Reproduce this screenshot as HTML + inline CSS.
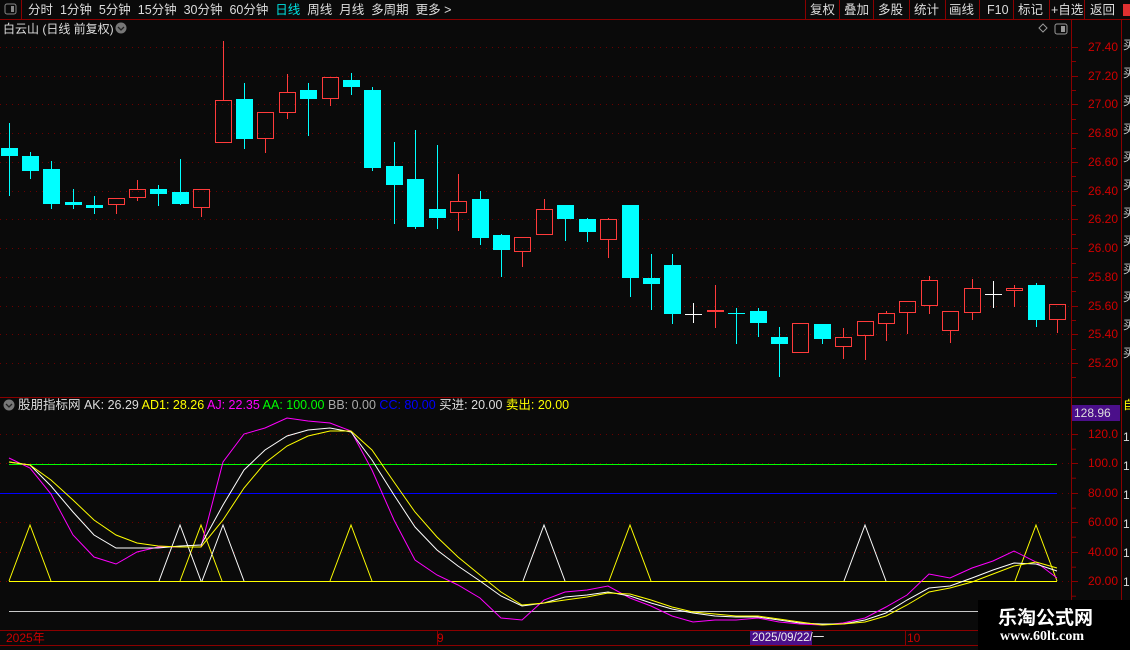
<!DOCTYPE html>
<html><head><meta charset="utf-8">
<style>
html,body{margin:0;padding:0;background:#0a0a0a;width:1130px;height:650px;overflow:hidden}
body{font-family:"Liberation Sans","Noto Sans CJK SC",sans-serif;position:relative}
.t{position:absolute;white-space:nowrap;font-size:12px;line-height:14px}
</style></head><body>
<svg id="s" width="1130" height="650" style="position:absolute;left:0;top:0" xmlns="http://www.w3.org/2000/svg">
<rect width="1130" height="650" fill="#0a0a0a"/>
<rect x="0" y="0" width="1130" height="19" fill="#0a0a0a"/>
<line x1="0" y1="19.5" x2="1130" y2="19.5" stroke="#8b0000"/>
<line x1="21.5" y1="0" x2="21.5" y2="19" stroke="#8b0000"/>
<rect x="5" y="4" width="11" height="10" rx="2" fill="none" stroke="#888"/><rect x="11" y="6" width="3" height="6" fill="#888"/>
<g stroke="#8b0000">
<line x1="805.5" y1="0" x2="805.5" y2="19"/><line x1="839.5" y1="0" x2="839.5" y2="19"/><line x1="873.5" y1="0" x2="873.5" y2="19"/><line x1="909.5" y1="0" x2="909.5" y2="19"/><line x1="945.5" y1="0" x2="945.5" y2="19"/><line x1="979.5" y1="0" x2="979.5" y2="19"/><line x1="1013.5" y1="0" x2="1013.5" y2="19"/><line x1="1049.5" y1="0" x2="1049.5" y2="19"/><line x1="1084.5" y1="0" x2="1084.5" y2="19"/>
</g>
<rect x="1123" y="4" width="7" height="12" fill="#e03030"/>
<line x1="1071.5" y1="19" x2="1071.5" y2="630" stroke="#8b0000"/>
<line x1="1121.5" y1="19" x2="1121.5" y2="650" stroke="#8b0000"/>
<line x1="0" y1="397.5" x2="1122" y2="397.5" stroke="#8b0000"/>
<line x1="0" y1="630.5" x2="1122" y2="630.5" stroke="#8b0000"/>
<line x1="0" y1="645.5" x2="1122" y2="645.5" stroke="#8b0000"/>
<line x1="437.5" y1="630" x2="437.5" y2="645" stroke="#8b0000"/>
<line x1="905.5" y1="630" x2="905.5" y2="645" stroke="#8b0000"/>
<rect x="750" y="631" width="62" height="14" fill="#4b0f8a"/>
<rect x="1072" y="405" width="48" height="16" fill="#4b0f8a"/>
<path d="M1043 24 l4 4 -4 4 -4 -4z" fill="none" stroke="#999"/>
<rect x="1055" y="24" width="12" height="10" rx="2" fill="none" stroke="#999"/><rect x="1061" y="26" width="4" height="6" fill="#999"/>
<circle cx="121" cy="28" r="5.5" fill="#777"/><path d="M118 27 l3 3 3-3" fill="none" stroke="#222" stroke-width="1.3"/>
<circle cx="9" cy="405" r="5.5" fill="#777"/><path d="M6 404 l3 3 3-3" fill="none" stroke="#222" stroke-width="1.3"/>
<g id="g"></g>
</svg>
<div class="t" style="left:28px;top:3px;color:#ddd;font-size:12.5px">分时&nbsp;&nbsp;1分钟&nbsp;&nbsp;5分钟&nbsp;&nbsp;15分钟&nbsp;&nbsp;30分钟&nbsp;&nbsp;60分钟&nbsp;&nbsp;<span style="color:#00e0e0">日线</span>&nbsp;&nbsp;周线&nbsp;&nbsp;月线&nbsp;&nbsp;多周期&nbsp;&nbsp;更多 &gt;</div>
<div class="t" style="left:810px;top:3px;color:#ddd;font-size:12.5px">复权</div>
<div class="t" style="left:844px;top:3px;color:#ddd;font-size:12.5px">叠加</div>
<div class="t" style="left:878px;top:3px;color:#ddd;font-size:12.5px">多股</div>
<div class="t" style="left:914px;top:3px;color:#ddd;font-size:12.5px">统计</div>
<div class="t" style="left:949px;top:3px;color:#ddd;font-size:12.5px">画线</div>
<div class="t" style="left:987px;top:3px;color:#ddd;font-size:12.5px">F10</div>
<div class="t" style="left:1018px;top:3px;color:#ddd;font-size:12.5px">标记</div>
<div class="t" style="left:1051px;top:3px;color:#ddd;font-size:12.5px">+自选</div>
<div class="t" style="left:1090px;top:3px;color:#ddd;font-size:12.5px">返回</div>
<div class="t" style="left:3px;top:22px;color:#ddd;font-size:12px">白云山 (日线 前复权)</div>
<div class="t" style="left:18px;top:398px;color:#ddd;font-size:12.5px">股朋指标网 AK: 26.29 <span style="color:#ff0">AD1: 28.26</span> <span style="color:#f0f">AJ: 22.35</span> <span style="color:#0f0">AA: 100.00</span> <span style="color:#aaa">BB: 0.00</span> <span style="color:#00f">CC: 80.00</span> 买进: 20.00 <span style="color:#ff0">卖出: 20.00</span></div>
<div id="ax"></div>
<div class="t" style="left:1074px;top:406px;color:#ddd;font-size:12px">128.96</div>
<div class="t" style="left:6px;top:631px;color:#c00;font-size:12px">2025年</div>
<div class="t" style="left:437px;top:631px;color:#c00;font-size:12px">9</div>
<div class="t" style="left:907px;top:631px;color:#c00;font-size:12px">10</div>
<div class="t" style="left:752px;top:631px;color:#eee;font-size:11.5px">2025/09/22/一</div>
<div style="position:absolute;left:978px;top:600px;width:152px;height:50px;background:#000"></div>
<div class="t" style="left:998px;top:606px;color:#fff;font-size:19px;line-height:22px;font-weight:bold;font-family:'Noto Sans CJK SC',sans-serif">乐淘公式网</div>
<div class="t" style="left:1000px;top:630px;color:#fff;font-size:14px;font-weight:bold;font-family:'Liberation Serif',serif">www.60lt.com</div>
<div class="t" style="left:1123px;top:398px;color:#ff0;font-size:12px">自</div>
<script>
var g=document.getElementById('g'),h='';
function L(x1,y1,x2,y2,c,w,d){h+='<line x1="'+x1+'" y1="'+y1+'" x2="'+x2+'" y2="'+y2+'" stroke="'+c+'" stroke-width="'+(w||1)+'"'+(d?' stroke-dasharray="'+d+'"':'')+'/>';}
var ax='';
for(var i=0;i<12;i++){var p=27.4-i*0.2,y=47+i*28.73;L(0,Math.round(y)+.5,1070,Math.round(y)+.5,'#6a0000',1,'1 5');L(1072,Math.round(y)+.5,1078,Math.round(y)+.5,'#8b0000');L(1072,Math.round(y+14.4)+.5,1076,Math.round(y+14.4)+.5,'#8b0000');
ax+='<div class="t" style="left:1080px;top:'+(Math.round(y)-7)+'px;width:38px;text-align:right;color:#d00000;font-size:12px">'+p.toFixed(2)+'</div>';}
var iv=[120,100,80,60,40,20];
iv.forEach(function(v){var y=Math.round(581-(v-20)*1.47)+.5;L(0,y,1070,y,'#6a0000',1,'1 5');L(1072,y,1078,y,'#8b0000');L(1072,y+14.7,1076,y+14.7,'#8b0000');
ax+='<div class="t" style="left:1080px;top:'+(y-7.5)+'px;width:38px;text-align:right;color:#d00000;font-size:12px">'+(v>=100?v.toFixed(1):v.toFixed(2))+'</div>';});
document.getElementById('ax').innerHTML=ax;
var sc='';for(var i=0;i<12;i++){sc+='<div class="t" style="left:1123px;top:'+(38+i*28)+'px;color:#ccc;font-size:12px">买</div>';}
for(var i=0;i<8;i++){sc+='<div class="t" style="left:1123px;top:'+(430+i*29)+'px;color:#ddd;font-size:12px">1</div>';}
document.getElementById('ax').innerHTML+=sc;
var C=[[9,123,148,156,196,'c'],[30,152,156,171,179,'c'],[51,161,169,204,209,'c'],[73,189,202,205,209,'c'],[94,196,205,208,214,'c'],[116,198,198,205,214,'r'],[137,180,189,198,201,'r'],[158,185,189,194,206,'c'],[180,159,192,204,205,'c'],[201,189,189,208,217,'r'],[223,41,100,143,143,'r'],[244,83,99,139,149,'c'],[265,112,112,139,153,'r'],[287,74,92,113,119,'r'],[308,83,90,99,136,'c'],[330,77,77,99,106,'r'],[351,73,80,87,95,'c'],[372,87,90,168,171,'c'],[394,142,166,185,224,'c'],[415,130,179,227,229,'c'],[437,145,209,218,229,'c'],[458,174,201,213,231,'r'],[480,191,199,238,245,'c'],[501,234,235,250,277,'c'],[522,237,237,252,267,'r'],[544,199,209,235,235,'r'],[565,205,205,219,241,'c'],[587,218,219,232,242,'c'],[608,218,219,240,258,'r'],[630,205,205,278,297,'c'],[651,254,278,284,310,'c'],[672,254,265,314,324,'c'],[693,303,314,314,323,'w'],[715,285,310,312,328,'rf'],[736,308,313,313,344,'cx'],[758,308,311,323,337,'c'],[779,327,337,344,377,'c'],[800,323,323,353,353,'r'],[822,324,324,339,344,'c'],[843,328,337,347,359,'r'],[865,321,321,336,360,'r'],[886,311,313,324,341,'r'],[907,301,301,313,334,'r'],[929,276,280,306,314,'r'],[950,311,311,331,343,'r'],[972,279,288,313,320,'r'],[993,281,294,294,308,'w'],[1014,285,288,291,307,'r'],[1036,283,285,320,327,'c'],[1057,304,304,320,333,'r']];
C.forEach(function(k){var x=k[0],t=k[5];
if(t=='c'){L(x+.5,k[1],x+.5,k[4],'#00ffff');h+='<rect x="'+(x-8)+'" y="'+k[2]+'" width="17" height="'+Math.max(2,k[3]-k[2])+'" fill="#00ffff"/>';}
else if(t=='r'){L(x+.5,k[1],x+.5,k[2],'#ff3b3b');L(x+.5,k[3],x+.5,k[4],'#ff3b3b');h+='<rect x="'+(x-7.5)+'" y="'+(k[2]+.5)+'" width="16" height="'+Math.max(1,k[3]-k[2]-1)+'" fill="none" stroke="#ff3b3b"/>';}
else if(t=='rf'){L(x+.5,k[1],x+.5,k[4],'#ff3b3b');h+='<rect x="'+(x-8)+'" y="'+k[2]+'" width="17" height="2" fill="#ff3b3b"/>';}
else{var c=t=='w'?'#fff':'#00ffff';L(x+.5,k[1],x+.5,k[4],c);L(x-8,k[2]+.5,x+9,k[2]+.5,c);}
});
L(9,464.5,1057,464.5,'#00ff00');L(0,493.5,1057,493.5,'#0000ff');L(9,581.5,1057,581.5,'#ffff00');L(9,611.5,1057,611.5,'#c8c8c8');
function T(a,c){h+='<polyline points="'+(a-21)+',581 '+a+',525 '+(a+21)+',581" fill="none" stroke="'+c+'"/>';}
[30,201,351,630,1036].forEach(function(a){T(a,'#ffff00')});[180,223,544,865].forEach(function(a){T(a,'#ffffff')});
var X=C.map(function(k){return k[0]});
function P(ys,c){var s='';ys.forEach(function(y,i){s+=X[i]+','+y+' '});h+='<polyline points="'+s+'" fill="none" stroke="'+c+'"/>';}
P([458,468,494,535,557,564,552,547,547,547,462,434,428,418,421,423,431,470,520,560,575,585,598,618,620,600,592,590,586,598,606,616,622,620,620,618,622,624,625,623,618,607,595,574,578,568,561,551,562,578],'#ff00ff');
P([462,465,486,512,535,548,548,548,546,545,505,470,450,436,430,428,432,460,495,527,550,566,581,596,606,603,597,595,592,596,603,609,613,616,617,617,620,623,624,624,620,613,600,588,586,578,570,563,564,571],'#ffffff');
P([462,465,480,500,520,535,543,546,547,547,520,488,463,446,436,431,431,450,482,512,537,557,575,592,605,603,600,597,593,594,600,607,612,614,616,616,619,622,625,624,622,616,605,592,588,582,574,566,562,568],'#ffff00');
g.innerHTML=h;
</script>
</body></html>
